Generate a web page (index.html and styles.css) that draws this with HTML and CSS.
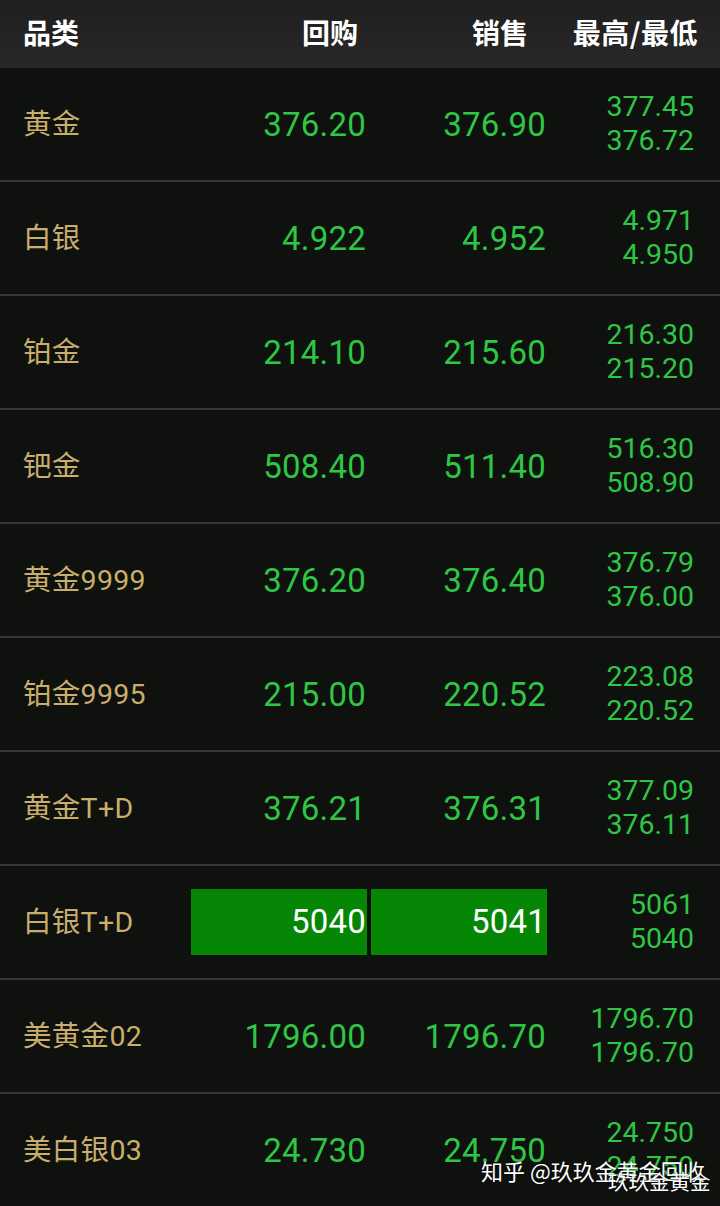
FILE: index.html
```html
<!DOCTYPE html>
<html lang="zh">
<head>
<meta charset="utf-8">
<link rel="stylesheet" href="styles.css">
</head>
<body>
<div class="page">
  <div class="head">
    <div class="h-name">品类</div>
    <div class="h-buy">回购</div>
    <div class="h-sell">销售</div>
    <div class="h-hl">最高/最低</div>
  </div>
  <div class="row"><div class="name">黄金</div><div class="num">376.20</div><div class="num">376.90</div><div class="hl"><span>377.45</span><span>376.72</span></div></div>
  <div class="row"><div class="name">白银</div><div class="num">4.922</div><div class="num">4.952</div><div class="hl"><span>4.971</span><span>4.950</span></div></div>
  <div class="row"><div class="name">铂金</div><div class="num">214.10</div><div class="num">215.60</div><div class="hl"><span>216.30</span><span>215.20</span></div></div>
  <div class="row"><div class="name">钯金</div><div class="num">508.40</div><div class="num">511.40</div><div class="hl"><span>516.30</span><span>508.90</span></div></div>
  <div class="row"><div class="name">黄金9999</div><div class="num">376.20</div><div class="num">376.40</div><div class="hl"><span>376.79</span><span>376.00</span></div></div>
  <div class="row"><div class="name">铂金9995</div><div class="num">215.00</div><div class="num">220.52</div><div class="hl"><span>223.08</span><span>220.52</span></div></div>
  <div class="row"><div class="name">黄金T+D</div><div class="num">376.21</div><div class="num">376.31</div><div class="hl"><span>377.09</span><span>376.11</span></div></div>
  <div class="row"><div class="name">白银T+D</div><div class="num box">5040</div><div class="num box">5041</div><div class="hl"><span>5061</span><span>5040</span></div></div>
  <div class="row"><div class="name">美黄金02</div><div class="num">1796.00</div><div class="num">1796.70</div><div class="hl"><span>1796.70</span><span>1796.70</span></div></div>
  <div class="row"><div class="name">美白银03</div><div class="num">24.730</div><div class="num">24.750</div><div class="hl"><span>24.750</span><span>24.750</span></div></div>
  <div class="mark">知乎 @玖玖金黄金回收</div>
  <div class="mark mark2">玖玖金黄金</div>
</div>
</body>
</html>
```

FILE: styles.css
```css
html, body {
  margin: 0;
  padding: 0;
  background: #0e110e;
}
.page {
  position: relative;
  width: 720px;
  height: 1206px;
  overflow: hidden;
  background: #0e110e;
  font-family: Roboto, "Noto Sans CJK SC", sans-serif;
}
.head {
  height: 68px;
  background: linear-gradient(#1f1f1f, #282828);
  display: grid;
  grid-template-columns: 168px 167px 170px 1fr;
  padding: 0 22px 0 23px;
  align-items: center;
  color: #ffffff;
  font-family: "Noto Sans CJK SC", sans-serif;
  font-weight: 700;
  font-size: 28px;
  box-sizing: border-box;
}
.h-name, .h-buy, .h-sell, .h-hl {
  margin-top: -5px;
}
.h-buy, .h-sell, .h-hl {
  text-align: right;
}
.h-hl {
  white-space: nowrap;
  letter-spacing: 0.5px;
}
.row {
  height: 112px;
  border-bottom: 2px solid #353835;
  display: grid;
  grid-template-columns: 164px 176px 176px 1fr;
  column-gap: 4px;
  padding: 0 26px 0 23px;
  align-items: center;
}
.name {
  color: #c9ae6c;
  font-family: Roboto, "Noto Sans CJK SC", sans-serif;
  font-size: 28.5px;
  white-space: nowrap;
  margin-top: -5px;
  letter-spacing: 0.3px;
}
.num {
  color: #2fc646;
  font-size: 33px;
  text-align: right;
  letter-spacing: 0.2px;
  padding-right: 1px;
}
.num.box {
  background: #058705;
  color: #ffffff;
  height: 66px;
  line-height: 66px;
}
.hl {
  display: flex;
  flex-direction: column;
  align-items: flex-end;
  color: #2fc646;
  font-size: 28.5px;
  line-height: 34px;
}
.mark {
  position: absolute;
  left: 481px;
  top: 1155px;
  color: #ffffff;
  font-family: "Noto Sans CJK SC", sans-serif;
  font-size: 22px;
  line-height: 30px;
  text-shadow: 0 0 2px rgba(0,0,0,0.6);
}
.mark2 {
  left: 608px;
  top: 1166px;
  font-size: 20.5px;
}
```
